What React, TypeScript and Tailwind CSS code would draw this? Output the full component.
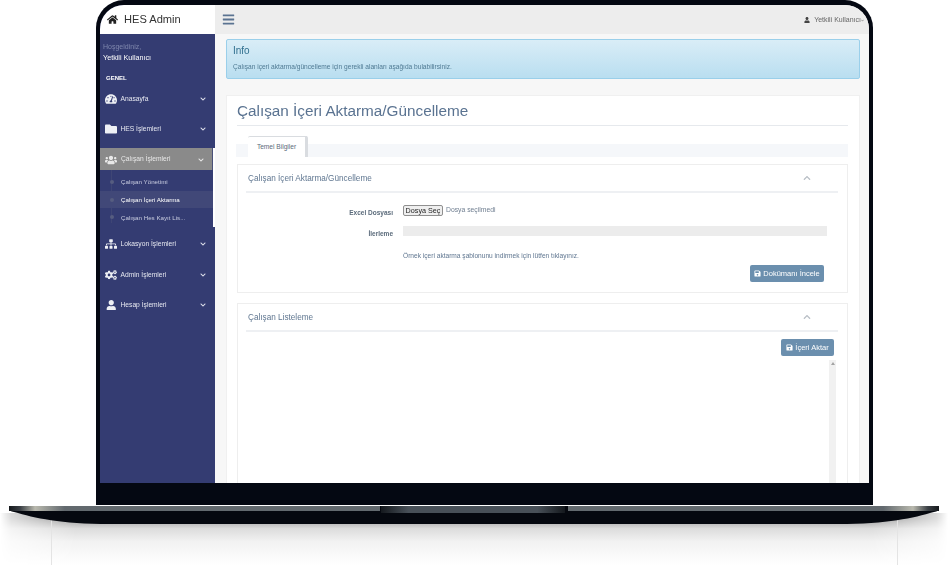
import React from "react";
import {
  FaBars,
  FaChevronDown,
  FaChevronUp,
  FaCogs,
  FaFolder,
  FaHome,
  FaSave,
  FaSitemap,
  FaTachometerAlt,
  FaUser,
  FaUsers,
} from "react-icons/fa";

function MenuItem(props: { icon: React.ReactNode; label: string; className?: string }) {
  return (
    <div className={"flex h-[30px] items-center pl-[5px] pr-[9px] text-[#e6e8f0] " + (props.className ?? "")}>
      <span className="flex w-[12px] justify-center text-[12px] text-[#eef0f5]">{props.icon}</span>
      <span className="ml-[3.5px] flex-1 text-[6.7px]">{props.label}</span>
      <FaChevronDown className="text-[6px] text-[#dfe2ec]" />
    </div>
  );
}

function SubItem(props: { label: string; active?: boolean }) {
  return (
    <div
      className={
        "relative flex h-[17.7px] items-center pl-[21px] text-[6.2px] " +
        (props.active ? "bg-[#414878] text-white" : "text-[#c9cde0]")
      }
    >
      <span className="absolute left-[9.5px] top-[7px] h-[4px] w-[4px] rounded-full bg-[#565d80]" />
      {props.label}
    </div>
  );
}

function Sidebar() {
  return (
    <div className="flex h-full w-[115px] shrink-0 flex-col bg-[#343c72]">
      <div className="flex h-[29px] shrink-0 items-center bg-white pl-[7px] text-[#222]">
        <FaHome className="text-[11px]" />
        <span className="ml-[6px] text-[11.1px] text-[#333]">HES Admin</span>
      </div>
      <div className="pl-[3px] pt-[8px] text-[7px] leading-[9px] text-[#7f87ad]">Hoşgeldiniz,</div>
      <div className="pl-[3px] pt-[2px] text-[7.2px] leading-[9px] text-white">Yetkili Kullanıcı</div>
      <div className="pl-[6px] pt-[12px] text-[6px] font-bold leading-[8px] text-white">GENEL</div>
      <MenuItem className="mt-[2px]" icon={<FaTachometerAlt />} label="Anasayfa" />
      <MenuItem icon={<FaFolder />} label="HES İşlemleri" />
      <div className="mt-[4px] border-r-2 border-white">
        <div className="flex h-[22px] items-center border-r border-[#4a5179] bg-[#8a8a8a] pl-[5px] pr-[8px] pt-[1px] text-[#e8e8e8]">
          <span className="flex w-[12px] justify-center text-[12px]">
            <FaUsers />
          </span>
          <span className="ml-[4px] flex-1 text-[6.7px]">Çalışan İşlemleri</span>
          <FaChevronDown className="text-[6px]" />
        </div>
        <div className="relative pb-[1px] pt-[3px]">
          <span className="absolute bottom-[4px] left-[11px] top-0 w-px bg-[#3f4675]" />
          <SubItem label="Çalışan Yönetimi" />
          <SubItem active label="Çalışan İçeri Aktarma" />
          <SubItem label="Çalışan Hes Kayıt Lis..." />
        </div>
      </div>
      <MenuItem icon={<FaSitemap />} label="Lokasyon İşlemleri" className="mt-[2px]" />
      <MenuItem icon={<FaCogs />} label="Admin İşlemleri" className="mt-px" />
      <MenuItem icon={<FaUser className="text-[10.5px]" />} label="Hesap İşlemleri" />
    </div>
  );
}

function PanelHeader(props: { title: string }) {
  return (
    <div className="ml-[8px] mr-[9px] flex h-[28px] items-center justify-between border-b-2 border-[#eef0f3] pl-[2px] pr-[27px] pt-[3px] text-[#5f7690]">
      <span className="text-[8.2px]">{props.title}</span>
      <FaChevronUp className="mb-[4px] text-[8px] text-[#b9bfc6]" />
    </div>
  );
}

function BlueButton(props: { label: string; className?: string }) {
  return (
    <button
      className={
        "flex h-[17px] items-center justify-center gap-[2px] rounded-[2px] bg-[#6b8fae] text-[7.5px] text-white " +
        (props.className ?? "")
      }
    >
      <FaSave className="text-[7px]" />
      {props.label}
    </button>
  );
}

function Content() {
  return (
    <div className="min-w-0 flex-1 bg-[#f7f7f7]">
      <div className="flex h-[29px] items-center justify-between bg-[#ededed] pl-[7px] pr-[5px]">
        <FaBars className="text-[13px] text-[#5a7391]" />
        <div className="flex items-center pt-[1px] text-[7px] text-[#666]">
          <FaUser className="mr-[4px] text-[6px] text-[#444]" />
          Yetkili Kullanıcı
          <FaChevronDown className="text-[3px]" />
        </div>
      </div>

      <div className="px-[11px] pr-[9px]">
        <div className="mt-[5px] h-[40px] rounded-[2px] border border-[#9acfea] bg-gradient-to-b from-[#d9edf7] to-[#b9def0] px-[6px] pt-[5px] text-[#31708f]">
          <div className="text-[10px] leading-[12px]">Info</div>
          <div className="mt-[5px] text-[6.6px] leading-[9px] text-[#4f7a93]">
            Çalışan içeri aktarma/güncelleme için gerekli alanları aşağıda bulabilirsiniz.
          </div>
        </div>

        <div className="mt-[16px] h-[400px] border border-[#f0f0f0] bg-white pl-[9px] pr-[11px]">
          <div className="ml-px h-[30px] border-b border-[#e6e9ed] pt-[5px] text-[15.3px] leading-[20px] text-[#5a7391]">
            Çalışan İçeri Aktarma/Güncelleme
          </div>

          <div className="relative mt-[18px] h-[13px] bg-[#f5f7fa]">
            <div className="absolute bottom-0 left-[12px] flex h-[21px] w-[60px] items-center justify-center rounded-t-[2px] border-r-[3px] border-t border-[#d9dce0] bg-white text-[6.6px] text-[#5b6b7b]">
              Temel Bilgiler
            </div>
          </div>

          <div className="ml-px mt-[7px] h-[129px] border border-[#eeeeee] bg-white">
            <PanelHeader title="Çalışan İçeri Aktarma/Güncelleme" />
            <div className="flex pl-[165px] pr-[20px] pt-[12px]">
              <div className="flex w-full flex-col">
                <div className="flex items-center">
                  <span className="-ml-[100px] w-[100px] translate-y-[2px] pr-[10px] text-right text-[6.5px] font-bold text-[#5b6b7b]">
                    Excel Dosyası
                  </span>
                  <button className="h-[11px] w-[40px] rounded-[2px] border border-[#8f8f8f] bg-[#efefef] text-[7.2px] leading-[9px] text-[#222]">
                    Dosya Seç
                  </button>
                  <span className="ml-[3px] text-[6.8px] text-[#6f7e90]">Dosya seçilmedi</span>
                </div>
                <div className="mt-[10px] flex items-center">
                  <span className="-ml-[100px] w-[100px] translate-y-[3px] pr-[10px] text-right text-[6.5px] font-bold text-[#5b6b7b]">
                    İlerleme
                  </span>
                  <div className="h-[10px] flex-1 bg-[#ececec]" />
                </div>
                <div className="mt-[15px] text-[6.6px] leading-[9px] text-[#5f7690]">
                  Örnek içeri aktarma şablonunu indirmek için lütfen tıklayınız.
                </div>
                <div className="mr-[3px] mt-[5px] flex justify-end">
                  <BlueButton label="Dokümanı İncele" className="w-[74px]" />
                </div>
              </div>
            </div>
          </div>

          <div className="ml-px mt-[10px] h-[220px] border border-[#eeeeee] bg-white">
            <PanelHeader title="Çalışan Listeleme" />
            <div className="mr-[13px] mt-[7px] flex justify-end">
              <BlueButton label="İçeri Aktar" className="w-[53px]" />
            </div>
            <div className="mr-[11px] mt-[4px] flex justify-end">
              <div className="flex h-[140px] w-[7px] justify-center bg-[#f1f1f1] pt-[2px]">
                <span className="h-0 w-0 border-x-[2px] border-b-[3px] border-x-transparent border-b-[#a3a3a3]" />
              </div>
            </div>
          </div>
        </div>
      </div>
    </div>
  );
}

function LaptopBase() {
  return (
    <svg width="948" height="60" viewBox="0 0 948 60" className="block">
      <defs>
        <linearGradient id="fade" x1="0" y1="0" x2="0" y2="1">
          <stop offset="0" stopColor="#8a8a8a" />
          <stop offset="0.1" stopColor="#9a9a9a" />
          <stop offset="0.3" stopColor="#dcdcdc" />
          <stop offset="0.55" stopColor="#f2f2f2" />
          <stop offset="1" stopColor="#ffffff" />
        </linearGradient>
        <linearGradient id="sideFade" x1="0" y1="0" x2="1" y2="0">
          <stop offset="0" stopColor="#000000" />
          <stop offset="0.012" stopColor="#555555" />
          <stop offset="0.08" stopColor="#ffffff" />
          <stop offset="0.92" stopColor="#ffffff" />
          <stop offset="0.988" stopColor="#555555" />
          <stop offset="1" stopColor="#000000" />
        </linearGradient>
        <mask id="sides">
          <rect x="0" y="0" width="948" height="60" fill="url(#sideFade)" />
        </mask>
        <linearGradient id="edge" x1="0" y1="0" x2="1" y2="0">
          <stop offset="0" stopColor="#15181c" />
          <stop offset="0.012" stopColor="#3a3f44" />
          <stop offset="0.028" stopColor="#b9b9ae" />
          <stop offset="0.06" stopColor="#62696e" />
          <stop offset="0.94" stopColor="#62696e" />
          <stop offset="0.972" stopColor="#b9b9ae" />
          <stop offset="0.988" stopColor="#3a3f44" />
          <stop offset="1" stopColor="#15181c" />
        </linearGradient>
        <linearGradient id="notch" x1="0" y1="0" x2="1" y2="0">
          <stop offset="0" stopColor="#14181d" />
          <stop offset="0.15" stopColor="#485058" />
          <stop offset="0.85" stopColor="#485058" />
          <stop offset="1" stopColor="#14181d" />
        </linearGradient>
      </defs>
      <rect x="0" y="8" width="948" height="52" fill="url(#fade)" mask="url(#sides)" />
      <rect x="51" y="15" width="1" height="45" fill="#e4e4e4" />
      <rect x="897" y="15" width="1" height="45" fill="#e4e4e4" />
      <path d="M9 1 H939 V4 Q939 6 934 7 C913 13 888 19 838 19 H110 C60 19 35 13 14 7 Q9 6 9 4 Z" fill="#05080f" />
      <rect x="9" y="1" width="930" height="5" fill="url(#edge)" />
      <rect x="380" y="1" width="188" height="8" fill="#05080f" />
      <rect x="381" y="1" width="184" height="7" fill="url(#notch)" />
    </svg>
  );
}

export default function App() {
  return (
    <div className="h-[565px] w-[948px] overflow-hidden bg-white" style={{ fontFamily: '"Liberation Sans", Arial, sans-serif' }}>
      <div className="ml-[96px] h-[505px] w-[777px] rounded-t-[28px] bg-[#040812] px-[4px] pt-[5px]">
        <div className="flex h-[478px] overflow-hidden rounded-t-[24px] blur-[0.4px]">
          <Sidebar />
          <Content />
        </div>
      </div>
      <LaptopBase />
    </div>
  );
}
